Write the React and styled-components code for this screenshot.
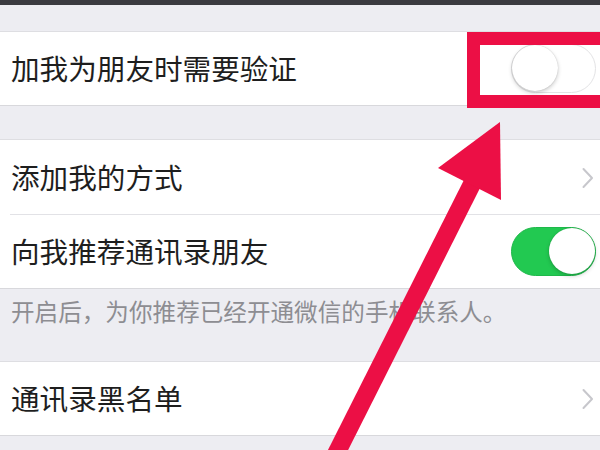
import React from "react";
import styled, { createGlobalStyle } from "styled-components";

const Global = createGlobalStyle`
  html, body { margin: 0; padding: 0; background: #efeff4; }
  body { font-family: "Noto Sans CJK SC", "Noto Sans", sans-serif; }
`;

const Page = styled.div`
  position: relative;
  width: 600px;
  height: 450px;
  overflow: hidden;
  background: #ededf2;
  display: flex;
  flex-direction: column;
`;

const TopBar = styled.div`
  height: 5px;
  background: #3b3b40;
  flex-shrink: 0;
`;

const Spacer = styled.div`
  height: ${(p) => p.h}px;
  flex-shrink: 0;
`;

const Group = styled.div`
  background: #fff;
  border-top: 1px solid #dedee2;
  border-bottom: 1px solid #d8d8dc;
  display: flex;
  flex-direction: column;
  flex-shrink: 0;
`;

const Row = styled.div`
  height: ${(p) => p.h || 73}px;
  display: flex;
  align-items: center;
  justify-content: space-between;
  padding: 0 4px 0 11px;
  box-sizing: border-box;
  position: relative;
  ${(p) =>
    p.divider &&
    `&::after {
      content: "";
      position: absolute;
      left: 10px;
      right: 0;
      bottom: 0;
      height: 1px;
      background: #e2e2e6;
    }`}
`;

const Label = styled.span`
  font-size: 28.6px;
  color: #1e1e1e;
  line-height: 1;
`;

const Footer = styled.div`
  height: 72px;
  padding: 5px 0 0 11px;
  box-sizing: border-box;
  font-size: 23.6px;
  color: #8d8d92;
  line-height: 1.5;
  flex-shrink: 0;
`;

const Track = styled.div`
  width: 85px;
  height: 49px;
  border-radius: 25px;
  box-sizing: border-box;
  position: relative;
  background: ${(p) => (p.on ? "#22c951" : "#fff")};
  border: 1.5px solid ${(p) => (p.on ? "#1fb84a" : "#e3e3e5")};
  flex-shrink: 0;
`;

const Knob = styled.div`
  position: absolute;
  top: 0;
  ${(p) => (p.on ? "right: 0;" : "left: 0;")}
  width: 46px;
  height: 46px;
  border-radius: 50%;
  background: #fff;
  box-shadow: 0 2px 4px rgba(0, 0, 0, 0.2), 0 0 1px rgba(0, 0, 0, 0.25);
`;

const Switch = ({ on }) => (
  <Track on={on}>
    <Knob on={on} />
  </Track>
);

const ChevronSvg = styled.svg`
  width: 14px;
  height: 22px;
  margin-right: 1px;
  flex-shrink: 0;
`;

const Chevron = () => (
  <ChevronSvg viewBox="0 0 14 22">
    <path d="M2.5 2 L11 11 L2.5 20" fill="none" stroke="#c7c7cc" strokeWidth="2" strokeLinecap="round" strokeLinejoin="round" />
  </ChevronSvg>
);

const HighlightBox = styled.div`
  position: absolute;
  left: 467px;
  top: 32px;
  width: 150px;
  height: 76px;
  border: 13px solid #ec0f45;
  box-sizing: border-box;
  pointer-events: none;
`;

const Overlay = styled.svg`
  position: absolute;
  left: 0;
  top: 0;
  width: 600px;
  height: 450px;
  pointer-events: none;
`;

export default function App() {
  return (
    <>
      <Global />
      <Page>
        <TopBar />
        <Spacer h={26} />
        <Group>
          <Row h={73}>
            <Label>加我为朋友时需要验证</Label>
            <Switch on={false} />
          </Row>
        </Group>
        <Spacer h={33} />
        <Group>
          <Row h={75} divider>
            <Label>添加我的方式</Label>
            <Chevron />
          </Row>
          <Row h={73}>
            <Label>向我推荐通讯录朋友</Label>
            <Switch on />
          </Row>
        </Group>
        <Footer>开启后，为你推荐已经开通微信的手机联系人。</Footer>
        <Group>
          <Row h={73}>
            <Label>通讯录黑名单</Label>
            <Chevron />
          </Row>
        </Group>
        <HighlightBox />
        <Overlay viewBox="0 0 600 450">
          <line x1="333" y1="460" x2="474" y2="180" stroke="#ec0f45" strokeWidth="18" />
          <polygon points="500,122 438,168 501,200" fill="#ec0f45" />
        </Overlay>
      </Page>
    </>
  );
}
